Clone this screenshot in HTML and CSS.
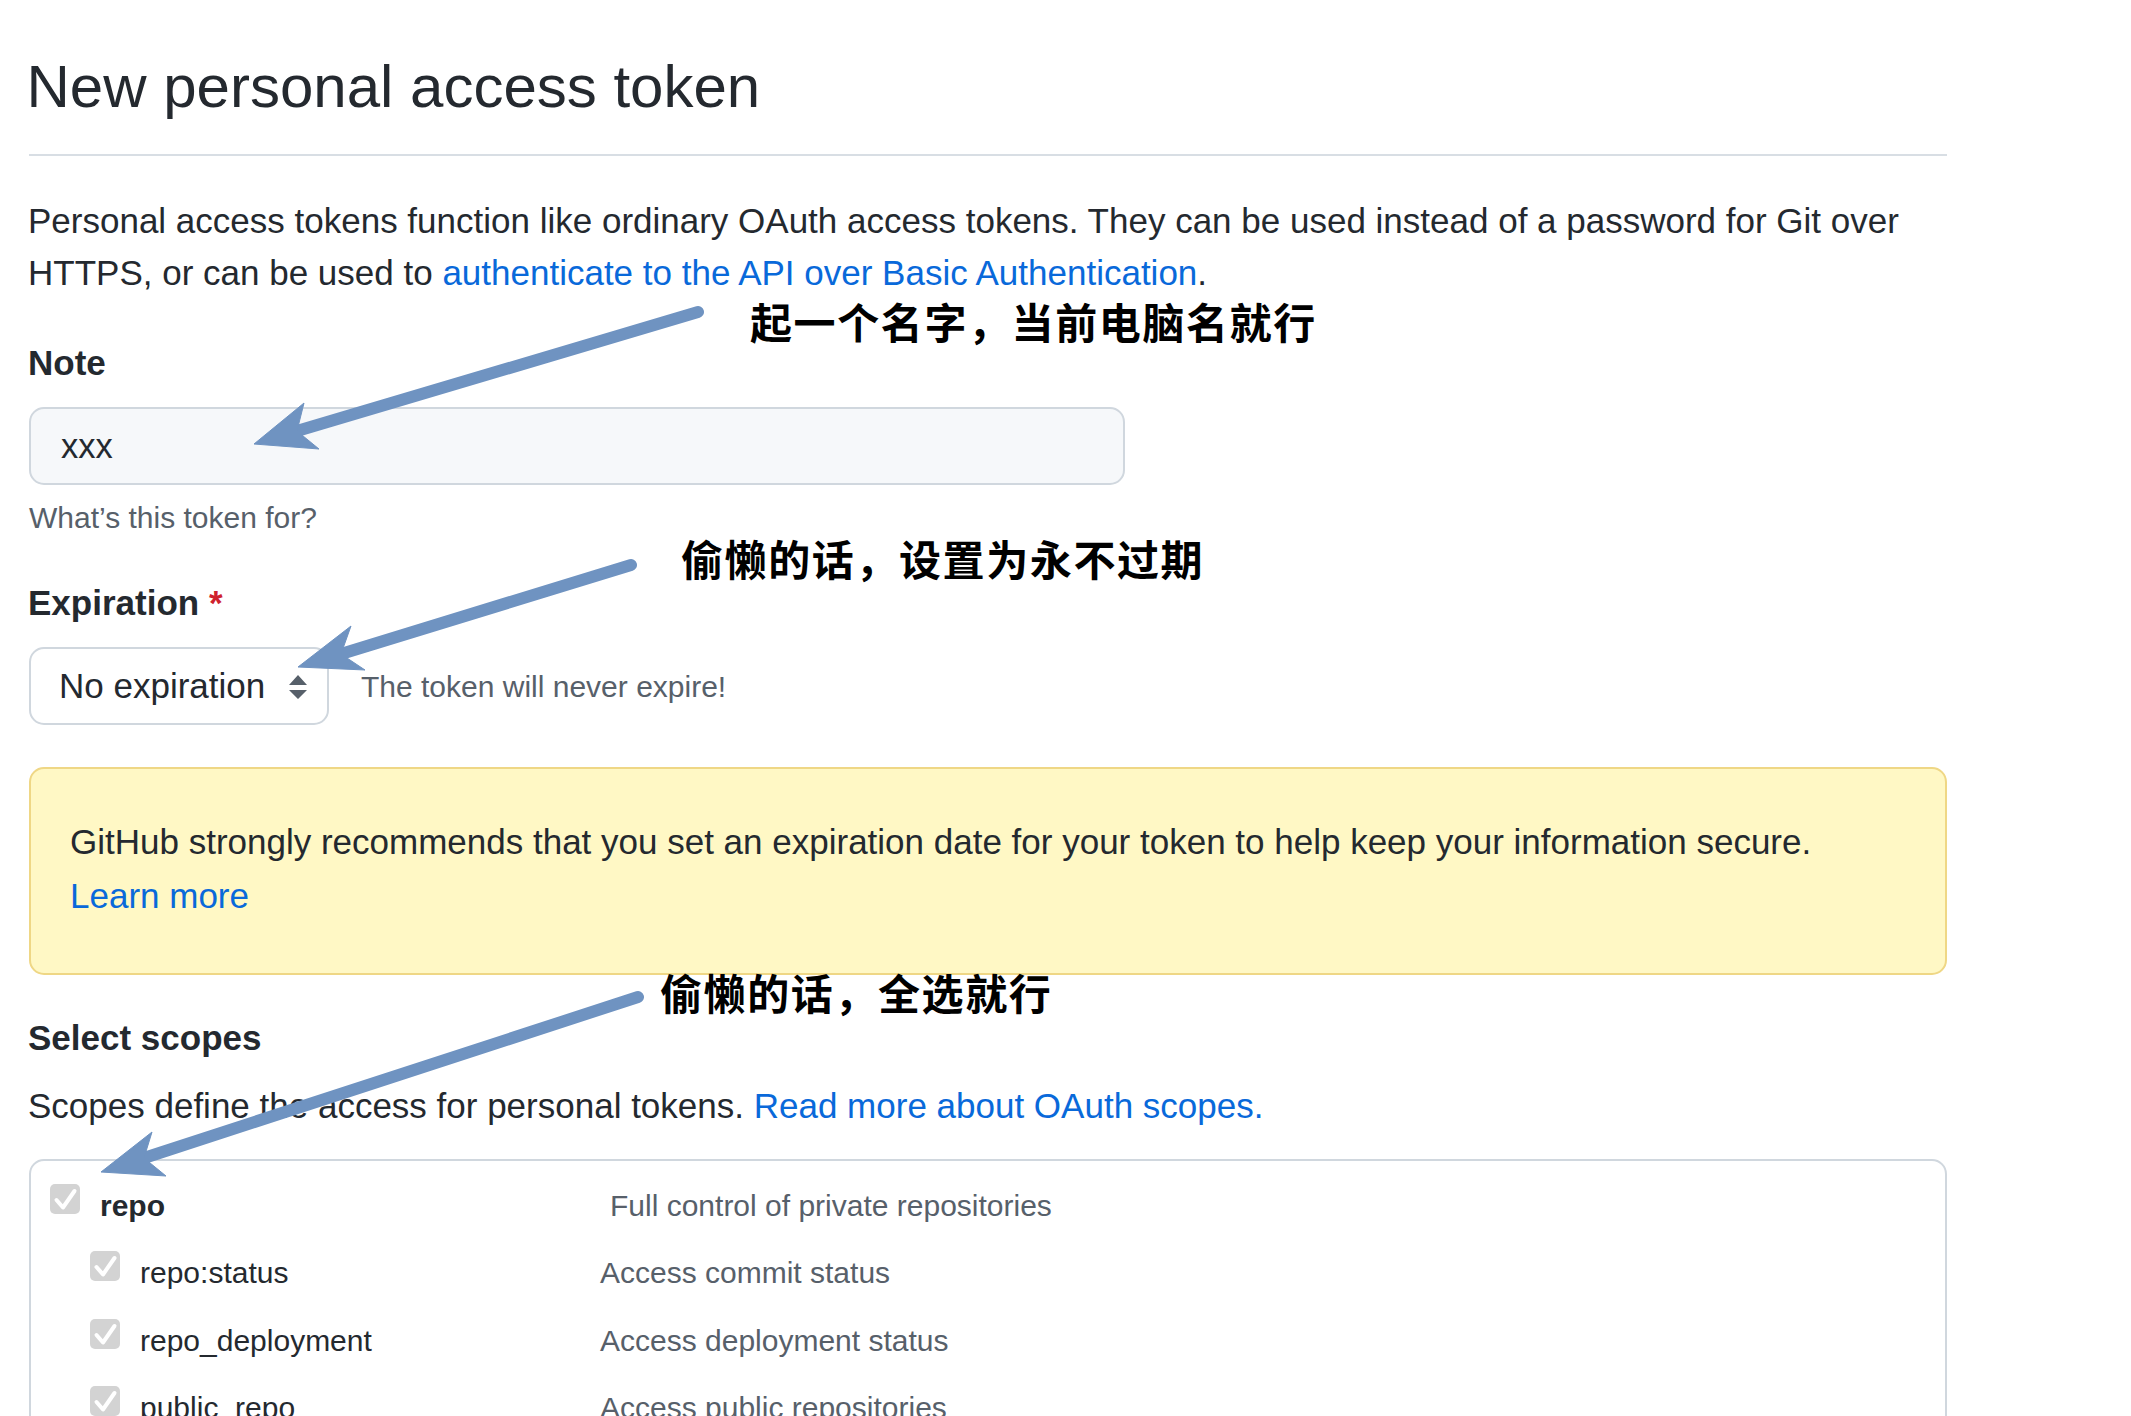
FILE: index.html
```html
<!DOCTYPE html>
<html lang="en">
<head>
<meta charset="utf-8">
<title>New personal access token</title>
<link rel="stylesheet" href="styles.css">
</head>
<body>
<main class="page">
  <div class="subhead">
    <h2 class="subhead-heading">New personal access token</h2>
  </div>
  <p class="lead">Personal access tokens function like ordinary OAuth access tokens. They can be used instead of a password for Git over HTTPS, or can be used to <a href="#">authenticate to the API over Basic Authentication</a>.</p>

  <div class="form-group">
    <label class="label">Note</label>
    <div class="input">xxx</div>
    <p class="note">What’s this token for?</p>
  </div>

  <div class="form-group">
    <label class="label label-exp">Expiration <span class="req">*</span></label>
    <div class="exp-row">
      <div class="select">
        <span>No expiration</span>
        <svg class="caret" width="18" height="24" viewBox="0 0 18 24"><path d="M0 10 L9 0 L18 10 Z M0 15 L18 15 L9 24 Z" fill="#57606a"/></svg>
      </div>
      <span class="note-inline">The token will never expire!</span>
    </div>
  </div>

  <div class="flash">
    GitHub strongly recommends that you set an expiration date for your token to help keep your information secure.<br>
    <a href="#">Learn more</a>
  </div>

  <h3 class="label scopes-title">Select scopes</h3>
  <p class="scopes-desc">Scopes define the access for personal tokens. <a href="#">Read more about OAuth scopes.</a></p>

  <div class="scopes">
    <div class="scope parent">
      <span class="cb"><svg width="30" height="30" viewBox="0 0 30 30"><path d="M6.5 16 L13 23.5 L24.5 7" fill="none" stroke="#fff" stroke-width="4" stroke-linecap="round" stroke-linejoin="round"/></svg></span>
      <span class="name">repo</span>
      <span class="desc">Full control of private repositories</span>
    </div>
    <div class="scope child">
      <span class="cb"><svg width="30" height="30" viewBox="0 0 30 30"><path d="M6.5 16 L13 23.5 L24.5 7" fill="none" stroke="#fff" stroke-width="4" stroke-linecap="round" stroke-linejoin="round"/></svg></span>
      <span class="name">repo:status</span>
      <span class="desc">Access commit status</span>
    </div>
    <div class="scope child">
      <span class="cb"><svg width="30" height="30" viewBox="0 0 30 30"><path d="M6.5 16 L13 23.5 L24.5 7" fill="none" stroke="#fff" stroke-width="4" stroke-linecap="round" stroke-linejoin="round"/></svg></span>
      <span class="name">repo_deployment</span>
      <span class="desc">Access deployment status</span>
    </div>
    <div class="scope child">
      <span class="cb"><svg width="30" height="30" viewBox="0 0 30 30"><path d="M6.5 16 L13 23.5 L24.5 7" fill="none" stroke="#fff" stroke-width="4" stroke-linecap="round" stroke-linejoin="round"/></svg></span>
      <span class="name">public_repo</span>
      <span class="desc">Access public repositories</span>
    </div>
    <div class="scope child">
      <span class="cb"><svg width="30" height="30" viewBox="0 0 30 30"><path d="M6.5 16 L13 23.5 L24.5 7" fill="none" stroke="#fff" stroke-width="4" stroke-linecap="round" stroke-linejoin="round"/></svg></span>
      <span class="name">repo:invite</span>
      <span class="desc">Access repository invitations</span>
    </div>
  </div>
</main>

<svg class="annotations" width="2131" height="1416" viewBox="0 0 2131 1416">
  <g fill="#6f93c1" stroke="#6f93c1">
    <line x1="698" y1="312" x2="297" y2="431" stroke-width="12" stroke-linecap="round"/>
    <polygon points="254,444 304,403 297,431 319,449" stroke-width="1"/>
    <line x1="631" y1="565" x2="341" y2="654" stroke-width="12" stroke-linecap="round"/>
    <polygon points="298,667 351,626 341,654 365,670" stroke-width="1"/>
    <line x1="638" y1="997" x2="144" y2="1158" stroke-width="12" stroke-linecap="round"/>
    <polygon points="101,1172 152,1132 144,1158 166,1176" stroke-width="1"/>
  </g>
</svg>
<div class="callout callout-1">起一个名字，当前电脑名就行</div>
<div class="callout callout-2">偷懒的话，设置为永不过期</div>
<div class="callout callout-3">偷懒的话，全选就行</div>
</body>
</html>
```

FILE: styles.css
```css
html, body {
  margin: 0;
  padding: 0;
  background: #ffffff;
  overflow: hidden;
}
body {
  position: relative;
  width: 2131px;
  height: 1416px;
  font-family: "Liberation Sans", Arial, Helvetica, sans-serif;
  color: #24292f;
}
a {
  color: #0969da;
  text-decoration: none;
}
.page {
  margin-left: 29px;
  width: 1918px;
  padding-top: 42px;
}
.subhead {
  padding-bottom: 22px;
  border-bottom: 2px solid #d8dee4;
}
.subhead-heading {
  margin: 0 0 0 -2.5px;
  font-size: 60px;
  font-weight: 400;
  line-height: 90px;
}
.lead {
  margin: 39px 0 0 -1px;
  font-size: 35px;
  line-height: 52px;
}
.form-group {
  margin-top: 38px;
}
.form-group + .form-group {
  margin-top: 37px;
}
.label {
  display: block;
  margin: 0 0 18px -1px;
  font-size: 35px;
  font-weight: 700;
  line-height: 52px;
}
.req {
  color: #cf222e;
}
.input {
  box-sizing: border-box;
  width: 1096px;
  height: 78px;
  padding-left: 30px;
  display: flex;
  align-items: center;
  background: #f6f8fa;
  border: 2px solid #d0d7de;
  border-radius: 15px;
  font-size: 34.5px;
}
.note {
  margin: 10px 0 0 0;
  font-size: 30px;
  line-height: 45px;
  color: #57606a;
}
.exp-row {
  display: flex;
  align-items: center;
  gap: 32px;
}
.select {
  box-sizing: border-box;
  width: 300px;
  height: 78px;
  padding: 0 20px 0 28px;
  display: flex;
  align-items: center;
  border: 2px solid #d0d7de;
  border-radius: 15px;
  font-size: 35px;
  background: #fff;
}
.caret {
  margin-left: auto;
  margin-top: 2px;
}
.note-inline {
  font-size: 30px;
  line-height: 45px;
  color: #57606a;
}
.flash {
  margin-top: 42px;
  padding: 46px 38px 50px 39px;
  background: #fff8c5;
  border: 2px solid #efd785;
  border-radius: 15px;
  font-size: 35px;
  line-height: 54px;
}
.scopes-title {
  margin: 37px 0 0 -1px;
}
.scopes-desc {
  margin: 16px 0 0 -1px;
  font-size: 35px;
  line-height: 52px;
}
.scopes {
  margin-top: 27px;
  padding-top: 18.6px;
  height: 600px;
  border: 2px solid #d0d7de;
  border-radius: 15px;
}
.scope {
  display: flex;
  align-items: flex-start;
  height: 52px;
  margin-bottom: 15.5px;
  font-size: 30px;
  line-height: 52px;
}
.cb {
  flex: none;
  width: 30px;
  height: 30px;
  margin-top: 4.4px;
  margin-right: 20px;
  background: #d3d3d3;
  border-radius: 5px;
  display: block;
}
.cb svg {
  display: block;
}
.parent {
  padding-left: 19px;
}
.parent .name {
  width: 510px;
  font-weight: 700;
}
.child {
  padding-left: 59px;
}
.child .name {
  width: 460px;
}
.name {
  flex: none;
  color: #24292f;
}
.desc {
  color: #57606a;
}
.annotations {
  position: absolute;
  left: 0;
  top: 0;
  pointer-events: none;
}
.callout {
  position: absolute;
  font-family: "Noto Sans CJK SC", "Noto Sans CJK JP", sans-serif;
  font-weight: 700;
  font-size: 42px;
  line-height: 42px;
  letter-spacing: 1.6px;
  color: #000;
  white-space: nowrap;
}
.callout-1 {
  left: 750px;
  top: 300px;
}
.callout-2 {
  left: 681px;
  top: 537px;
}
.callout-3 {
  left: 660px;
  top: 971px;
}
```
